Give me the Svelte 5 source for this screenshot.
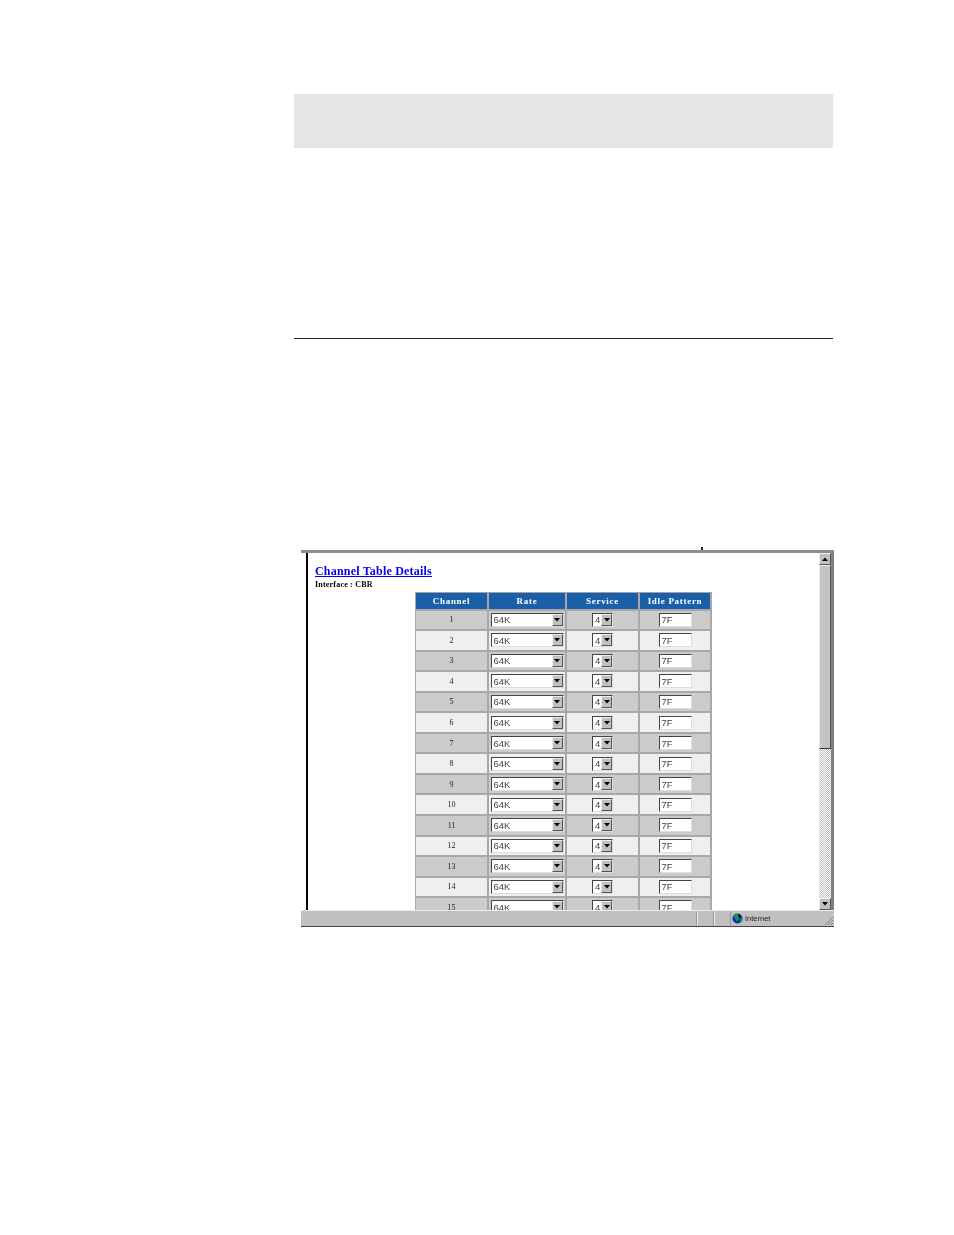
<script>
  const rows = Array.from({ length: 15 }, (_, i) => i + 1);
</script>

<div class="page">
  <div class="band"></div>
  <hr class="rule" />

  <div class="window">
    <div class="top"><span class="tick"></span></div>
    <div class="main">
      <div class="content">
        <a class="title" href="#details">Channel Table Details</a>
        <div class="iface">Interface : CBR</div>
        <table>
          <colgroup>
            <col class="c1" />
            <col class="c2" />
            <col class="c3" />
            <col class="c4" />
          </colgroup>
          <thead>
            <tr>
              <th>Channel</th>
              <th>Rate</th>
              <th>Service</th>
              <th>Idle Pattern</th>
            </tr>
          </thead>
          <tbody>
            {#each rows as n}
              <tr class:even={n % 2 === 0}>
                <td class="num">{n}</td>
                <td>
                  <div class="select rate">
                    <span>64K</span>
                    <i class="btn"><svg width="6" height="4" viewBox="0 0 6 4"><path d="M0 0h6L3 3.5z" fill="#000" /></svg></i>
                  </div>
                </td>
                <td>
                  <div class="select service">
                    <span>4</span>
                    <i class="btn"><svg width="6" height="4" viewBox="0 0 6 4"><path d="M0 0h6L3 3.5z" fill="#000" /></svg></i>
                  </div>
                </td>
                <td><div class="input">7F</div></td>
              </tr>
            {/each}
          </tbody>
        </table>
      </div>
      <div class="scrollbar">
        <i class="btn arrow"><svg width="6" height="4" viewBox="0 0 6 4"><path d="M0 4h6L3 .5z" fill="#000" /></svg></i>
        <div class="thumb"></div>
        <div class="track"></div>
        <i class="btn arrow"><svg width="6" height="4" viewBox="0 0 6 4"><path d="M0 0h6L3 3.5z" fill="#000" /></svg></i>
      </div>
    </div>
    <div class="status">
      <div class="cell grow"></div>
      <div class="cell small"></div>
      <div class="cell small"></div>
      <div class="cell zone">
        <svg width="11" height="11" viewBox="0 0 11 11">
          <circle cx="5.5" cy="5.5" r="5" fill="#1226c8" />
          <path d="M1.5 3l3-2.2 2.5 1-1 2.2 1.2 2-2 2.5-2-2.5zM8 6l2.4-1 0 3-2.4 1.6z" fill="#12a02a" />
          <path d="M6 1.5l2 .5 1 1.5-2 .5z" fill="#000" />
        </svg>
        <span>Internet</span>
      </div>
      <svg class="grip" width="11" height="11" viewBox="0 0 11 11">
        <path d="M10 2L2 10M10 5L5 10M10 8L8 10" stroke="#808080" fill="none" />
      </svg>
    </div>
  </div>
</div>

<style>
  :global(body) {
    background: #fff;
  }

  .page {
    width: 954px;
    height: 1235px;
    padding: 94px 121px 0 294px;
    box-sizing: border-box;
    overflow: hidden;
  }

  .band {
    height: 54px;
    background: #e5e5e5;
  }

  .rule {
    margin: 190px 0 0;
    border: 0;
    height: 1px;
    background: #222;
  }

  .window {
    margin: 208px 0 0 7px;
    width: 533px;
    height: 380px;
    display: flex;
    flex-direction: column;
    position: relative;
    filter: blur(0.3px);
  }

  .top {
    height: 3px;
    flex: none;
    border-bottom: 3px solid #8c8c8c;
    position: relative;
  }

  .tick {
    position: absolute;
    left: 400px;
    top: 0;
    width: 2px;
    height: 3px;
    background: #222;
  }

  .main {
    flex: 1;
    min-height: 0;
    display: flex;
    border-right: 3px solid #808080;
  }

  .content {
    flex: 1;
    min-width: 0;
    margin-left: 5px;
    border-left: 2px solid #000;
    padding: 11px 0 0 7px;
    overflow: hidden;
    font-family: "Liberation Serif", serif;
  }

  .title {
    display: block;
    color: #0000ee;
    font-size: 12px;
    font-weight: bold;
    letter-spacing: 0.2px;
    line-height: 14px;
    text-decoration: underline;
  }

  .iface {
    margin-top: 2px;
    font-size: 8px;
    font-weight: bold;
    letter-spacing: 0.2px;
    line-height: 10px;
    color: #000;
  }

  table {
    margin: 2px 0 0 100px;
    border-collapse: separate;
    border-spacing: 0;
    table-layout: fixed;
    width: 297px;
    background: #fff;
    border-top: 1px solid #a0a0a0;
  }

  .c1 {
    width: 74px;
  }

  .c2 {
    width: 78px;
  }

  .c3 {
    width: 73px;
  }

  .c4 {
    width: 72px;
  }

  th {
    height: 15.5px;
    padding: 0;
    background: #1a60a8;
    color: #fff;
    font-size: 9px;
    font-weight: bold;
    letter-spacing: 0.7px;
    border-right: 2px solid #a8a8a8;
    border-bottom: 2px solid #a8a8a8;
  }

  th:first-child {
    border-left: 1px solid #a8a8a8;
  }

  td {
    height: 18.55px;
    padding: 0;
    background: #cbcbcb;
    text-align: center;
    border-right: 2px solid #a8a8a8;
    border-bottom: 2px solid #a8a8a8;
  }

  td:first-child {
    border-left: 1px solid #a8a8a8;
  }

  .even td {
    background: #efefef;
  }

  .num {
    font-size: 8px;
    color: #222;
  }

  .select,
  .input {
    box-sizing: border-box;
    margin: 0 auto;
    height: 14px;
    background: #fff;
    border: 1px solid;
    border-color: #444 #ddd #ddd #444;
    display: flex;
    align-items: center;
    font-family: "Liberation Sans", sans-serif;
    font-size: 9.5px;
    color: #444;
    text-align: left;
  }

  .select span,
  .input {
    padding-left: 2px;
  }

  .select span {
    flex: 1;
  }

  .rate {
    width: 73px;
  }

  .service {
    width: 21px;
  }

  .input {
    width: 33px;
  }

  .btn {
    display: flex;
    align-items: center;
    justify-content: center;
    flex: none;
    width: 11px;
    height: 12px;
    box-sizing: border-box;
    background: #c0c0c0;
    border: 1px solid;
    border-color: #eee #555 #555 #eee;
  }

  .scrollbar {
    flex: none;
    width: 12px;
    display: flex;
    flex-direction: column;
    background: #fff;
  }

  .arrow {
    width: 12px;
    height: 12px;
  }

  .thumb {
    height: 184px;
    box-sizing: border-box;
    background: #c4c4c4;
    border: 1px solid;
    border-color: #eee #555 #333 #eee;
  }

  .track {
    flex: 1;
    background-color: #fff;
    background-image: conic-gradient(#c0c0c0 25%, #fff 0 50%, #c0c0c0 0 75%, #fff 0);
    background-size: 2px 2px;
  }

  .status {
    flex: none;
    height: 17px;
    box-sizing: border-box;
    background: #c0c0c0;
    border-top: 1px solid #eee;
    border-bottom: 1px solid #444;
    display: flex;
    position: relative;
    font-family: "Liberation Sans", sans-serif;
    font-size: 7.5px;
    color: #222;
  }

  .cell {
    box-sizing: border-box;
    border-left: 1px solid #eee;
    border-right: 1px solid #999;
  }

  .grow {
    width: 396px;
    border-left: 0;
  }

  .small {
    width: 17px;
  }

  .zone {
    flex: 1;
    display: flex;
    align-items: center;
    gap: 2px;
    padding-left: 1px;
    border: 0;
  }

  .grip {
    position: absolute;
    right: 0;
    bottom: 0;
  }
</style>
